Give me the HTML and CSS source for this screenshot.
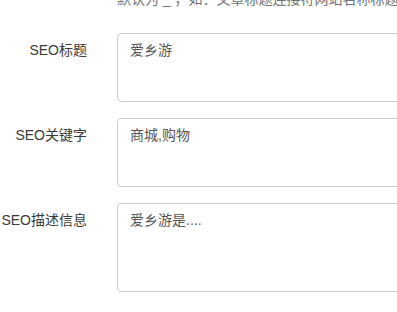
FILE: index.html
```html
<!DOCTYPE html>
<html lang="zh-CN">
<head>
<meta charset="utf-8">
<title>SEO设置</title>
<link rel="stylesheet" href="styles.css">
</head>
<body>
<form class="form">
  <div class="row hint-row">
    <div class="label-col"></div>
    <div class="control-col">
      <p class="help">默认为 _ ，如：文章标题连接符网站名称标题站点</p>
    </div>
  </div>
  <div class="row">
    <label class="label-col label" for="seo-title">SEO标题</label>
    <div class="control-col">
      <textarea id="seo-title" class="input">爱乡游</textarea>
    </div>
  </div>
  <div class="row">
    <label class="label-col label" for="seo-kw">SEO关键字</label>
    <div class="control-col">
      <textarea id="seo-kw" class="input">商城,购物</textarea>
    </div>
  </div>
  <div class="row">
    <label class="label-col label" for="seo-desc">SEO描述信息</label>
    <div class="control-col">
      <textarea id="seo-desc" class="input input-tall">爱乡游是....</textarea>
    </div>
  </div>
</form>
</body>
</html>
```

FILE: styles.css
```css
html, body {
  margin: 0;
  padding: 0;
  overflow: hidden;
  background: #fff;
}

body {
  font-family: "Liberation Sans", "Noto Sans CJK SC", sans-serif;
  font-size: 14px;
  line-height: 20px;
  color: #333;
}

.form {
  width: 600px;
  margin-top: -11px;
  display: flex;
  flex-direction: column;
  gap: 16px;
}

.row {
  display: grid;
  grid-template-columns: 102px 1fr;
}

.hint-row {
  margin-bottom: 8px;
}

.label-col {
  padding-right: 15px;
}

.label {
  padding-top: 7px;
  text-align: right;
  color: #3a3a3a;
}

.control-col {
  padding-left: 15px;
}

.help {
  margin: 0;
  color: #737373;
  white-space: nowrap;
}

.input {
  display: block;
  box-sizing: border-box;
  width: 100%;
  height: 69px;
  margin: 0;
  padding: 6px 12px;
  border: 1px solid #ccc;
  border-radius: 4px;
  font-family: "Liberation Sans", "Noto Sans CJK SC", sans-serif;
  font-size: 14px;
  line-height: 20px;
  color: #555;
  background: #fff;
  resize: none;
}

.input-tall {
  height: 89px;
}
```
